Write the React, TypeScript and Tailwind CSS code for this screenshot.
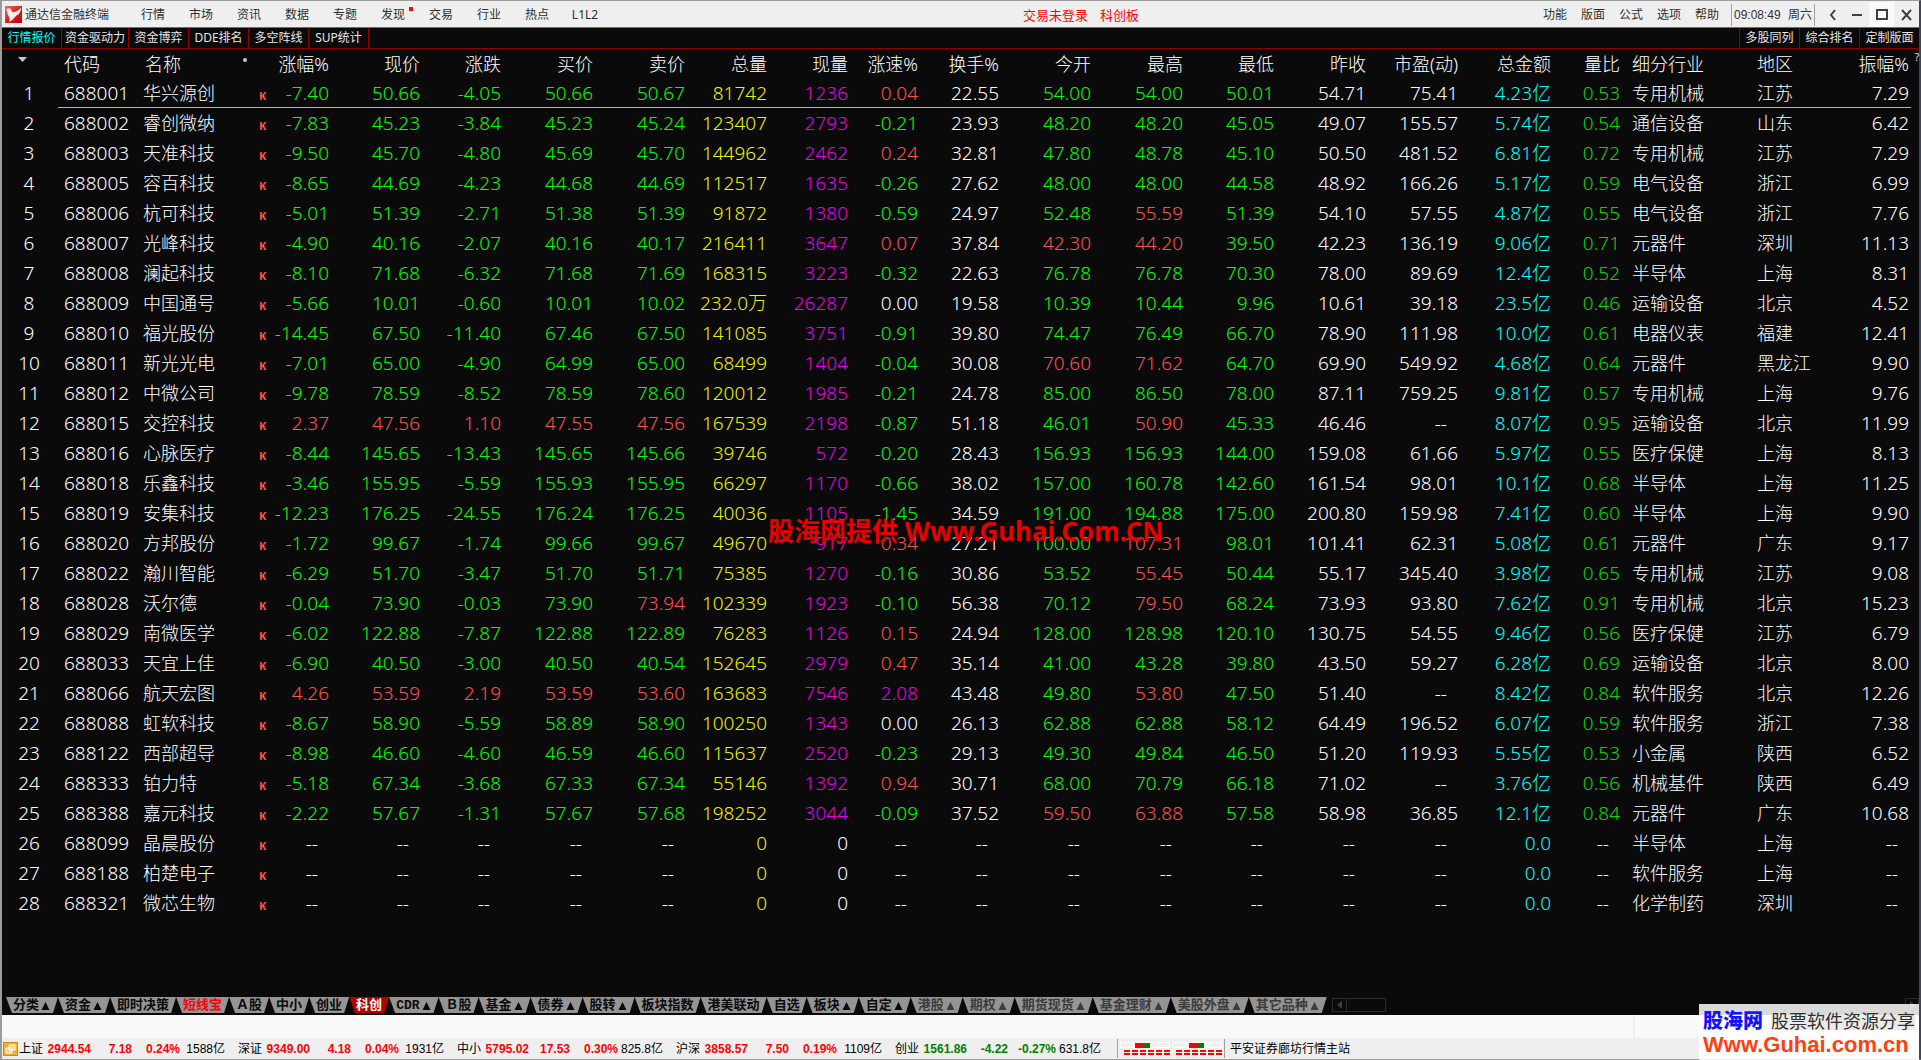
import React, { useState } from "react";
import clsx from "clsx";

const MENU = ["行情", "市场", "资讯", "数据", "专题", "发现", "交易", "行业", "热点", "L1L2"];
const TOOLS = ["功能", "版面", "公式", "选项", "帮助"];
const VIEWS = ["行情报价", "资金驱动力", "资金博弈", "DDE排名", "多空阵线", "SUP统计"];
const LAYOUTS = ["多股同列", "综合排名", "定制版面"];

// code name chg% price diff buy sell vol now speed% turnover% open high low prev pe amount ratio industry area amp%
const QUOTES = `
688001 华兴源创 -7.40 50.66 -4.05 50.66 50.67 81742 1236 0.04 22.55 54.00 54.00 50.01 54.71 75.41 4.23亿 0.53 专用机械 江苏 7.29
688002 睿创微纳 -7.83 45.23 -3.84 45.23 45.24 123407 2793 -0.21 23.93 48.20 48.20 45.05 49.07 155.57 5.74亿 0.54 通信设备 山东 6.42
688003 天准科技 -9.50 45.70 -4.80 45.69 45.70 144962 2462 0.24 32.81 47.80 48.78 45.10 50.50 481.52 6.81亿 0.72 专用机械 江苏 7.29
688005 容百科技 -8.65 44.69 -4.23 44.68 44.69 112517 1635 -0.26 27.62 48.00 48.00 44.58 48.92 166.26 5.17亿 0.59 电气设备 浙江 6.99
688006 杭可科技 -5.01 51.39 -2.71 51.38 51.39 91872 1380 -0.59 24.97 52.48 55.59 51.39 54.10 57.55 4.87亿 0.55 电气设备 浙江 7.76
688007 光峰科技 -4.90 40.16 -2.07 40.16 40.17 216411 3647 0.07 37.84 42.30 44.20 39.50 42.23 136.19 9.06亿 0.71 元器件 深圳 11.13
688008 澜起科技 -8.10 71.68 -6.32 71.68 71.69 168315 3223 -0.32 22.63 76.78 76.78 70.30 78.00 89.69 12.4亿 0.52 半导体 上海 8.31
688009 中国通号 -5.66 10.01 -0.60 10.01 10.02 232.0万 26287 0.00 19.58 10.39 10.44 9.96 10.61 39.18 23.5亿 0.46 运输设备 北京 4.52
688010 福光股份 -14.45 67.50 -11.40 67.46 67.50 141085 3751 -0.91 39.80 74.47 76.49 66.70 78.90 111.98 10.0亿 0.61 电器仪表 福建 12.41
688011 新光光电 -7.01 65.00 -4.90 64.99 65.00 68499 1404 -0.04 30.08 70.60 71.62 64.70 69.90 549.92 4.68亿 0.64 元器件 黑龙江 9.90
688012 中微公司 -9.78 78.59 -8.52 78.59 78.60 120012 1985 -0.21 24.78 85.00 86.50 78.00 87.11 759.25 9.81亿 0.57 专用机械 上海 9.76
688015 交控科技 2.37 47.56 1.10 47.55 47.56 167539 2198 -0.87 51.18 46.01 50.90 45.33 46.46 -- 8.07亿 0.95 运输设备 北京 11.99
688016 心脉医疗 -8.44 145.65 -13.43 145.65 145.66 39746 572 -0.20 28.43 156.93 156.93 144.00 159.08 61.66 5.97亿 0.55 医疗保健 上海 8.13
688018 乐鑫科技 -3.46 155.95 -5.59 155.93 155.95 66297 1170 -0.66 38.02 157.00 160.78 142.60 161.54 98.01 10.1亿 0.68 半导体 上海 11.25
688019 安集科技 -12.23 176.25 -24.55 176.24 176.25 40036 1105 -1.45 34.59 191.00 194.88 175.00 200.80 159.98 7.41亿 0.60 半导体 上海 9.90
688020 方邦股份 -1.72 99.67 -1.74 99.66 99.67 49670 917 0.34 27.21 100.00 107.31 98.01 101.41 62.31 5.08亿 0.61 元器件 广东 9.17
688022 瀚川智能 -6.29 51.70 -3.47 51.70 51.71 75385 1270 -0.16 30.86 53.52 55.45 50.44 55.17 345.40 3.98亿 0.65 专用机械 江苏 9.08
688028 沃尔德 -0.04 73.90 -0.03 73.90 73.94 102339 1923 -0.10 56.38 70.12 79.50 68.24 73.93 93.80 7.62亿 0.91 专用机械 北京 15.23
688029 南微医学 -6.02 122.88 -7.87 122.88 122.89 76283 1126 0.15 24.94 128.00 128.98 120.10 130.75 54.55 9.46亿 0.56 医疗保健 江苏 6.79
688033 天宜上佳 -6.90 40.50 -3.00 40.50 40.54 152645 2979 0.47 35.14 41.00 43.28 39.80 43.50 59.27 6.28亿 0.69 运输设备 北京 8.00
688066 航天宏图 4.26 53.59 2.19 53.59 53.60 163683 7546 2.08 43.48 49.80 53.80 47.50 51.40 -- 8.42亿 0.84 软件服务 北京 12.26
688088 虹软科技 -8.67 58.90 -5.59 58.89 58.90 100250 1343 0.00 26.13 62.88 62.88 58.12 64.49 196.52 6.07亿 0.59 软件服务 浙江 7.38
688122 西部超导 -8.98 46.60 -4.60 46.59 46.60 115637 2520 -0.23 29.13 49.30 49.84 46.50 51.20 119.93 5.55亿 0.53 小金属 陕西 6.52
688333 铂力特 -5.18 67.34 -3.68 67.33 67.34 55146 1392 0.94 30.71 68.00 70.79 66.18 71.02 -- 3.76亿 0.56 机械基件 陕西 6.49
688388 嘉元科技 -2.22 57.67 -1.31 57.67 57.68 198252 3044 -0.09 37.52 59.50 63.88 57.58 58.98 36.85 12.1亿 0.84 元器件 广东 10.68
688099 晶晨股份 -- -- -- -- -- 0 0 -- -- -- -- -- -- -- 0.0 -- 半导体 上海 --
688188 柏楚电子 -- -- -- -- -- 0 0 -- -- -- -- -- -- -- 0.0 -- 软件服务 上海 --
688321 微芯生物 -- -- -- -- -- 0 0 -- -- -- -- -- -- -- 0.0 -- 化学制药 深圳 --`
  .trim()
  .split("\n")
  .map((line) => line.split(" "));

type Kind = "sign" | "price" | "volume" | "now" | "speed" | "plain" | "amount" | "ratio" | "text";

const COLUMNS: { title: string; kind: Kind; width: string }[] = [
  { title: "涨幅%", kind: "sign", width: "w-[56px]" },
  { title: "现价", kind: "price", width: "w-[91px]" },
  { title: "涨跌", kind: "sign", width: "w-[81px]" },
  { title: "买价", kind: "price", width: "w-[92px]" },
  { title: "卖价", kind: "price", width: "w-[92px]" },
  { title: "总量", kind: "volume", width: "w-[82px]" },
  { title: "现量", kind: "now", width: "w-[81px]" },
  { title: "涨速%", kind: "speed", width: "w-[70px]" },
  { title: "换手%", kind: "plain", width: "w-[81px]" },
  { title: "今开", kind: "price", width: "w-[92px]" },
  { title: "最高", kind: "price", width: "w-[92px]" },
  { title: "最低", kind: "price", width: "w-[91px]" },
  { title: "昨收", kind: "plain", width: "w-[92px]" },
  { title: "市盈(动)", kind: "plain", width: "w-[92px]" },
  { title: "总金额", kind: "amount", width: "w-[93px]" },
  { title: "量比", kind: "ratio", width: "w-[69px]" },
  { title: "细分行业", kind: "text", width: "" },
  { title: "地区", kind: "text", width: "w-[85px]" },
  { title: "振幅%", kind: "plain", width: "w-[79px]" },
];

const PREV_CLOSE = 12;

const SHEETS: { name: string; arrow?: boolean; tone?: "hot" | "dim" }[] = [
  { name: "分类", arrow: true },
  { name: "资金", arrow: true },
  { name: "即时决策" },
  { name: "短线宝", tone: "hot" },
  { name: "Ａ股" },
  { name: "中小" },
  { name: "创业" },
  { name: "科创" },
  { name: "CDR", arrow: true },
  { name: "Ｂ股" },
  { name: "基金", arrow: true },
  { name: "债券", arrow: true },
  { name: "股转", arrow: true },
  { name: "板块指数" },
  { name: "港美联动" },
  { name: "自选" },
  { name: "板块", arrow: true },
  { name: "自定", arrow: true },
  { name: "港股", arrow: true, tone: "dim" },
  { name: "期权", arrow: true, tone: "dim" },
  { name: "期货现货", arrow: true, tone: "dim" },
  { name: "基金理财", arrow: true, tone: "dim" },
  { name: "美股外盘", arrow: true, tone: "dim" },
  { name: "其它品种", arrow: true, tone: "dim" },
];

const INDEXES = [
  ["上证", "2944.54", "7.18", "0.24%", "1588亿"],
  ["深证", "9349.00", "4.18", "0.04%", "1931亿"],
  ["中小", "5795.02", "17.53", "0.30%", "825.8亿"],
  ["沪深", "3858.57", "7.50", "0.19%", "1109亿"],
  ["创业", "1561.86", "-4.22", "-0.27%", "631.8亿"],
];

const WHITE = "text-white";
const RED = "text-[#ff5050]";
const GREEN = "text-[#00ff00]";
const PURPLE = "text-[#e600e6]";

function byDelta(delta: number) {
  if (delta > 0) return RED;
  if (delta < 0) return GREEN;
  return WHITE;
}

function cellColor(kind: Kind, value: string, prev: string) {
  if (kind === "amount") return "text-[#00ffff]";
  if (kind === "volume") return "text-[#f0f000]";
  if (value === "--") return WHITE;
  if (kind === "sign") return byDelta(Number(value));
  if (kind === "speed") return Number(value) >= 2 ? PURPLE : byDelta(Number(value));
  if (kind === "price") return byDelta(Number(value) - Number(prev));
  if (kind === "now") return value === "0" ? WHITE : PURPLE;
  if (kind === "ratio") return "text-[#00dc00]";
  return WHITE;
}

export default function App() {
  return (
    <div className="relative flex min-h-screen flex-col border-t border-r-2 border-b border-l-2 border-[#9c9c9c] border-r-[#3c4658] bg-[#0a0a0a] font-['Noto_Sans','Noto_Sans_CJK_SC',sans-serif] text-[12px] leading-4">
      <MenuBar />
      <ViewBar />
      <main className="relative flex-1 pr-2">
        <QuoteTable />
        <span className="absolute top-0 right-0 text-[10px] text-[#e6e6e6]">?</span>
        <p className="pointer-events-none absolute top-[464px] left-[766px] text-[26px] leading-9 font-bold whitespace-nowrap text-[#e60000]">
          股海网提供 Www.Guhai.Com.CN
        </p>
      </main>
      <SheetTabs />
      <div className="flex h-[23px] justify-end bg-[#fafafa]">
        <div className="w-[286px] border-l-2 border-[#efefef]" />
      </div>
      <StatusBar />
      <SiteBadge />
    </div>
  );
}

function MenuBar() {
  return (
    <header className="flex h-[27px] items-center border-b border-[#6e6e6e] bg-[#efefef] pt-px pl-[3px] whitespace-nowrap text-[#303030]">
      <svg viewBox="0 0 17 17" className="size-[17px] shrink-0">
        <defs>
          <linearGradient id="logo" x1="0" y1="0" x2="1" y2="1">
            <stop offset="0" stopColor="#f07060" />
            <stop offset="0.5" stopColor="#d82020" />
            <stop offset="1" stopColor="#b80808" />
          </linearGradient>
        </defs>
        <rect width="17" height="17" fill="url(#logo)" />
        <path d="M1 3.500C3 1.500 6 1.800 6.500 4.500c.2 1.500 1 2 2.500 1.500 2.500-.8 5-1.500 7-4.500 0 4-1.500 6.500-4.500 8C9.500 11 8 14.500 4 16c1-2.500.8-4-.5-6C2 8 3 5 1 3.500z" fill="#fdeeee" />
      </svg>
      <span className="ml-[3px] w-[104px]">通达信金融终端</span>
      <nav className="flex">
        {MENU.map((item) => (
          <button key={item} type="button" className="relative w-12 text-center">
            {item}
            {item === "发现" && <i className="absolute top-0 right-1 size-[4px] bg-[#ff0000]" />}
          </button>
        ))}
      </nav>
      <div className="mr-[404px] flex flex-1 justify-end gap-3 text-[13px] text-[#ff0000]">
        <a href="#login">交易未登录</a>
        <a href="#star">科创板</a>
      </div>
      <div className="flex gap-[14px] pr-3">
        {TOOLS.map((item) => (
          <button key={item} type="button">{item}</button>
        ))}
      </div>
      <div className="flex h-[22px] items-center gap-1 border-x border-[#a0a0a0] px-[2px]">
        <span className="w-[50px] font-['Liberation_Sans',sans-serif]">09:08:49</span>
        <span>周六</span>
      </div>
      <WindowButtons />
    </header>
  );
}

function WindowButtons() {
  const shapes = [
    { label: "收起", d: "M11 3L7 8l4 5" },
    { label: "最小化", d: "M3 8h10" },
    { label: "最大化", d: "M3 3h10v9H3z" },
    { label: "关闭", d: "M3 3l9 10M12 3L3 13" },
  ];
  return (
    <div className="flex pl-1">
      {shapes.map((s) => (
        <button
          key={s.label}
          type="button"
          aria-label={s.label}
          className={clsx("flex h-[25px] w-[25px] items-center justify-center", s.label === "最大化" && "bg-[#fafafa]")}
        >
          <svg viewBox="0 0 16 16" className="size-4">
            <path d={s.d} fill="none" stroke="#404040" strokeWidth="2" />
          </svg>
        </button>
      ))}
    </div>
  );
}

function ViewBar() {
  const [view, setView] = useState(VIEWS[0]);
  return (
    <div className="flex h-[21px] justify-between border-b border-[#8c0000] whitespace-nowrap text-[#e6e6e6]">
      <div className="flex">
        {VIEWS.map((item) => (
          <button
            key={item}
            type="button"
            onClick={() => setView(item)}
            className={clsx("min-w-[60px] border-r border-[#8c0000] px-[3px]", item === view && "text-[#00ffff]")}
          >
            {item}
          </button>
        ))}
      </div>
      <div className="flex">
        {LAYOUTS.map((item) => (
          <button key={item} type="button" className="w-[60px] border-l border-[#8c0000]">
            {item}
          </button>
        ))}
      </div>
    </div>
  );
}

function QuoteTable() {
  return (
    <table className="w-full table-fixed border-separate border-spacing-0 text-right text-[18px] leading-6 font-light whitespace-nowrap text-white">
      <thead>
        <tr className="h-[29px]">
          <th className="w-[56px] p-0" aria-label="序号">
            <svg viewBox="0 0 9 5" className="mb-2 ml-4 h-[5px] w-[9px]">
              <path d="M0 0h9L4.500 5z" fill="#c8c8c8" />
            </svg>
          </th>
          <th className="w-[79px] p-0 pl-[6px] text-left font-light">代码</th>
          <th className="w-[110px] p-0 pl-2 text-left font-light">
            <span className="flex items-center justify-between">
              名称
              <i className="mb-2 size-1 rounded-full bg-[#c8c8c8]" />
            </span>
          </th>
          <th className="w-[26px] p-0" aria-label="标记" />
          {COLUMNS.map((col) => (
            <th
              key={col.title}
              className={clsx("p-0 font-light", col.width, col.kind === "text" && "pl-3 text-left")}
            >
              <span className={clsx(col.kind !== "text" && "float-right")}>{col.title}</span>
            </th>
          ))}
          <th className="w-[2px] p-0" aria-hidden="true" />
        </tr>
      </thead>
      <tbody>
        {QUOTES.map(([code, name, ...values], index) => {
          const line = index === 0 && "border-b border-[#c8c800]";
          return (
            <tr key={code} className="h-[30px]">
              <td className="p-0 pr-[2px] text-center text-[19px]">{index + 1}</td>
              <td className={clsx("p-0 pl-[6px] text-left text-[19px]", line)}>{code}</td>
              <td className={clsx("p-0 pl-[6px] text-left", line)}>{name}</td>
              <td className={clsx("p-0 pt-[6px] pl-3 text-left text-[11px] leading-3 font-bold text-[#ff5050]", line)}>K</td>
              {COLUMNS.map((col, i) => (
                <td
                  key={col.title}
                  className={clsx(
                    "p-0",
                    col.kind === "text" ? "pl-3 text-left" : "text-[19px]",
                    values[i] === "--" && "pr-[11px]",
                    cellColor(col.kind, values[i], values[PREV_CLOSE]),
                    line
                  )}
                >
                  <span className={clsx(col.kind !== "text" && "float-right")}>{values[i]}</span>
                </td>
              ))}
              <td className={clsx("p-0", line)} />
            </tr>
          );
        })}
      </tbody>
    </table>
  );
}

function SheetTabs() {
  const [active, setActive] = useState("科创");
  return (
    <div className="flex h-[18px] items-start pl-1 font-['Liberation_Mono','Noto_Sans_CJK_SC',monospace] text-[13px] whitespace-nowrap">
      {SHEETS.map(({ name, arrow, tone }) => (
        <button
          key={name}
          type="button"
          onClick={() => setActive(name)}
          className={clsx(
            "flex h-4 items-center px-[7px] pt-px leading-4 font-bold [clip-path:polygon(0_0,100%_0,calc(100%-5px)_100%,6px_100%)]",
            name === active ? "bg-[#b40000] text-white" : "bg-[#949494]",
            name !== active && !tone && "text-[#0a0a0a]",
            name !== active && tone === "hot" && "text-[#ff0000]",
            name !== active && tone === "dim" && "text-[#3c3c3c]"
          )}
        >
          {name}
          {arrow && (
            <svg viewBox="0 0 12 10" className="h-[10px] w-3">
              <path d="M6.500 1L10.500 9h-8z" fill="currentColor" />
            </svg>
          )}
        </button>
      ))}
      <div className="mt-px ml-[5px] flex h-[14px] w-[54px] border border-[#2c2c2c]">
        <button type="button" aria-label="向左" className="flex w-[14px] items-center justify-center border-r border-[#2c2c2c]">
          <svg viewBox="0 0 5 8" className="h-2 w-[5px]">
            <path d="M5 0v8L0 4z" fill="#3c3c3c" />
          </svg>
        </button>
      </div>
      <button
        type="button"
        aria-label="向右"
        className="mt-px ml-auto flex size-[14px] items-center justify-center border border-[#2c2c2c]"
      >
        <svg viewBox="0 0 5 8" className="h-2 w-[5px]">
          <path d="M0 0v8l5-4z" fill="#3c3c3c" />
        </svg>
      </button>
    </div>
  );
}

function StatusBar() {
  return (
    <footer className="flex h-[21px] items-center bg-[#efefef] pl-px font-['Liberation_Sans','Noto_Sans_CJK_SC',sans-serif] whitespace-nowrap text-black">
      <svg viewBox="0 0 15 14" className="h-[14px] w-[15px]">
        <rect x="0.500" y="0.500" width="14" height="13" fill="#f5b030" stroke="#d08a10" />
        <path d="M6 3h6v5H6zM3 6h6v5H3z" fill="#fbd070" stroke="#fff" />
      </svg>
      <div className="flex pr-[3px] pl-px">
        {INDEXES.map(([name, price, diff, pct, amount]) => {
          const color = diff.startsWith("-") ? "text-[#008000]" : "text-[#ff0000]";
          return (
            <div key={name} className="flex w-[219px]">
              <span className="w-6">{name}</span>
              <b className={clsx("w-12 text-right", color)}>{price}</b>
              <b className={clsx("w-[41px] text-right", color)}>{diff}</b>
              <b className={clsx("w-[48px] text-right", color)}>{pct}</b>
              <span className="w-[45px] text-right">{amount}</span>
            </div>
          );
        })}
      </div>
      <div className="flex h-[19px] items-center gap-[2px] border-x border-[#a0a0a0] px-[2px]">
        <TrafficMeter at={15} />
        <TrafficMeter at={17} />
      </div>
      <span className="pl-[5px]">平安证券廊坊行情主站</span>
    </footer>
  );
}

function TrafficMeter({ at }: { at: number }) {
  return (
    <svg viewBox="0 0 50 15" className="h-[15px] w-[50px]">
      <path d="M.5 1.500h49v5H.5zM13.500 1.500v5M37.500 1.500v5" fill="#efefef" stroke="#fff" />
      <rect x={at} y="2" width="8" height="5" fill="#ff0000" />
      <rect x={at + 8} y="2" width="7" height="5" fill="#008000" />
      <path d="M4 10h46M4 13h46" stroke="#ff0000" strokeWidth="2" strokeDasharray="6 2" />
    </svg>
  );
}

function SiteBadge() {
  return (
    <aside className="absolute right-0 -bottom-px h-14 w-[220px] bg-white/85 px-1 pt-[5px] whitespace-nowrap">
      <div className="flex items-center justify-between leading-6">
        <b className="text-[20px] font-black text-[#1414ff]">股海网</b>
        <span className="bg-[#d8d8d8]/50 text-[18px] leading-[18px] text-[#303030]">股票软件资源分享</span>
      </div>
      <a
        href="#guhai"
        className="block font-['Liberation_Sans',sans-serif] text-[22px] leading-6 font-black text-[#ff4010]"
      >
        Www.Guhai.com.cn
      </a>
    </aside>
  );
}
